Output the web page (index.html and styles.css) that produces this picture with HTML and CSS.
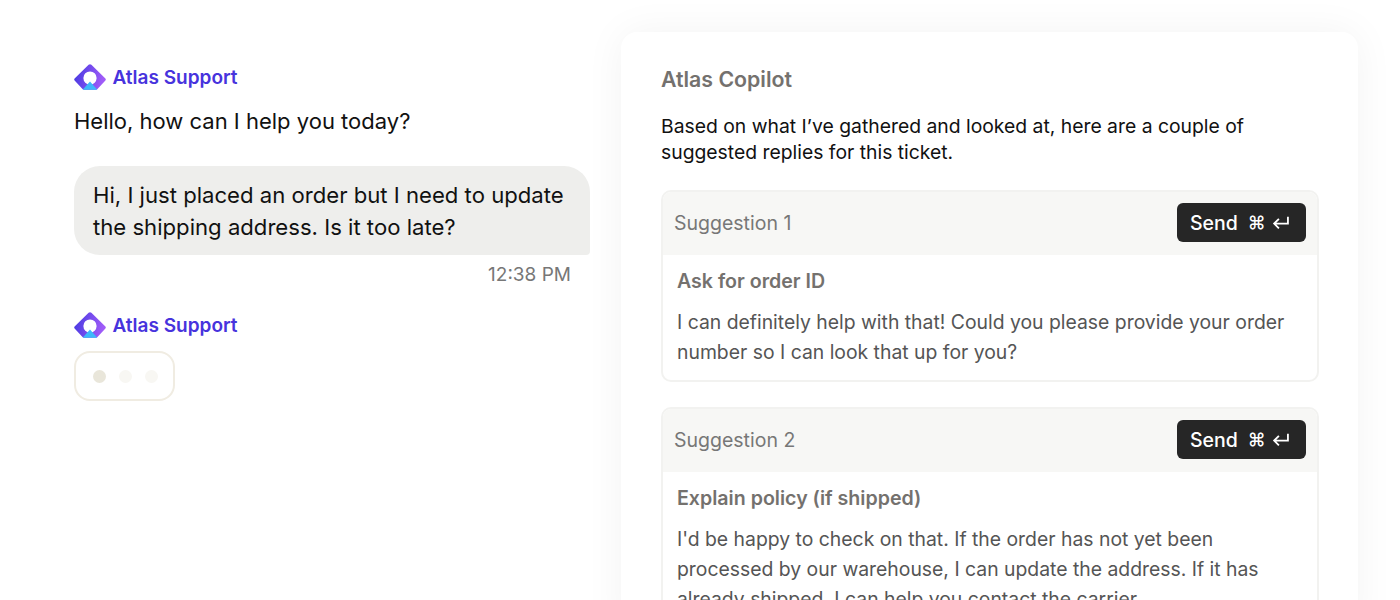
FILE: index.html
```html
<!DOCTYPE html>
<html lang="en">
<head>
    <meta charset="UTF-8">
    <meta name="viewport" content="width=device-width, initial-scale=1.0">
    <title>Atlas Copilot</title>
    <link rel="stylesheet" href="styles.css">
</head>
<body>
    <svg class="defs" width="0" height="0" aria-hidden="true">
        <defs>
            <linearGradient id="logo-grad" x1="0" y1="0" x2="1" y2="0.2">
                <stop offset="0" stop-color="#4338e0"/>
                <stop offset="1" stop-color="#a05cf8"/>
            </linearGradient>
            <symbol id="logo" viewBox="0 0 32 26">
                <path d="M14.6 0.8 Q16 -0.2 17.4 0.8 L31.4 14.6 Q32.2 15.6 31.4 16.6 L23.5 25 Q22.8 25.8 21.8 25.8 L10.2 25.8 Q9.2 25.8 8.5 25 L0.6 16.6 Q-0.2 15.6 0.6 14.6 Z" fill="url(#logo-grad)"/>
                <circle cx="16" cy="14" r="6.6" fill="#fff"/>
                <path d="M16 17.6 L23.4 25.8 L8.6 25.8 Z" fill="#3db8fa"/>
            </symbol>
        </defs>
    </svg>

    <main class="page">
        <section class="chat">
            <div class="agent">
                <svg class="agent-logo"><use href="#logo"/></svg>
                <span class="agent-name">Atlas Support</span>
            </div>
            <p class="agent-msg">Hello, how can I help you today?</p>

            <div class="bubble">Hi, I just placed an order but I need to update the shipping address. Is it too late?</div>
            <div class="timestamp">12:38 PM</div>

            <div class="agent agent-second">
                <svg class="agent-logo"><use href="#logo"/></svg>
                <span class="agent-name">Atlas Support</span>
            </div>
            <div class="typing">
                <span class="dot dot-on"></span>
                <span class="dot"></span>
                <span class="dot"></span>
            </div>
        </section>

        <section class="copilot">
            <h1>Atlas Copilot</h1>
            <p class="intro">Based on what I’ve gathered and looked at, here are a couple of suggested replies for this ticket.</p>

            <div class="card">
                <div class="card-header">
                    <span class="card-label">Suggestion 1</span>
                    <button class="send">Send <span class="keys">⌘ <svg class="enter" viewBox="0 0 16 14"><path d="M15 1.5 V8 H2 M6.5 3.5 L2 8 L6.5 12.5" fill="none" stroke="currentColor" stroke-width="1.7"/></svg></span></button>
                </div>
                <div class="card-body">
                    <h2>Ask for order ID</h2>
                    <p>I can definitely help with that! Could you please provide your order number so I can look that up for you?</p>
                </div>
            </div>

            <div class="card">
                <div class="card-header">
                    <span class="card-label">Suggestion 2</span>
                    <button class="send">Send <span class="keys">⌘ <svg class="enter" viewBox="0 0 16 14"><path d="M15 1.5 V8 H2 M6.5 3.5 L2 8 L6.5 12.5" fill="none" stroke="currentColor" stroke-width="1.7"/></svg></span></button>
                </div>
                <div class="card-body">
                    <h2>Explain policy (if shipped)</h2>
                    <p>I'd be happy to check on that. If the order has not yet been processed by our warehouse, I can update the address. If it has already shipped, I can help you contact the carrier.</p>
                </div>
            </div>
        </section>
    </main>
</body>
</html>
```

FILE: styles.css
```css
* {
    margin: 0;
    padding: 0;
    box-sizing: border-box;
    font-family: Inter, 'Liberation Sans', sans-serif;
}

html, body {
    height: 100%;
    overflow: hidden;
}

body {
    background-color: #fff;
    color: #111;
}

.defs {
    position: absolute;
}

.page {
    display: flex;
    align-items: flex-start;
    padding: 32px 42px 0 74px;
    gap: 31px;
}

/* Chat column */
.chat {
    width: 516px;
    flex-shrink: 0;
    padding-top: 32px;
}

.agent {
    display: flex;
    align-items: center;
    gap: 6.5px;
    height: 26px;
}

.agent-second {
    margin-top: 25px;
}

.agent-logo {
    width: 32px;
    height: 26px;
}

.agent-name {
    color: #4733dd;
    font-size: 19px;
    font-weight: 600;
}

.agent-msg {
    margin-top: 15px;
    font-size: 22px;
    line-height: 32px;
}

.bubble {
    margin-top: 29px;
    padding: 13px 19px 12px;
    background-color: #eeeeec;
    border-radius: 26px 26px 4px 26px;
    font-size: 22.14px;
    line-height: 32px;
}

.timestamp {
    margin-top: 8px;
    padding-right: 19px;
    color: #777;
    font-size: 19px;
    line-height: 24px;
    text-align: right;
}

.typing {
    display: flex;
    align-items: center;
    gap: 13px;
    width: 101px;
    height: 50px;
    margin-top: 13px;
    padding-left: 17px;
    border: 2px solid #f0ece2;
    border-radius: 16px;
}

.dot {
    width: 13px;
    height: 13px;
    border-radius: 50%;
    background-color: #f8f7f3;
}

.dot-on {
    background-color: #e9e6da;
}

/* Copilot panel */
.copilot {
    flex: 1;
    height: 600px;
    padding: 34px 39px 0 40px;
    background-color: #fff;
    border-radius: 16px 16px 0 0;
    box-shadow: 0 0 40px rgba(0, 0, 0, 0.05);
}

.copilot h1 {
    color: #74716e;
    font-size: 21.3px;
    font-weight: 600;
    line-height: 26px;
}

.intro {
    margin-top: 21px;
    font-size: 19.33px;
    line-height: 26px;
}

.card {
    margin-top: 25px;
    border: 2px solid #f2f2f0;
    border-radius: 10px;
    overflow: hidden;
}

.card-header {
    display: flex;
    align-items: center;
    justify-content: space-between;
    height: 63px;
    padding: 0 11px 2px;
    background-color: #f7f7f5;
}

.card-label {
    color: #777;
    font-size: 19.5px;
}

.send {
    display: flex;
    align-items: center;
    gap: 10px;
    width: 129px;
    height: 39px;
    padding-left: 13px;
    border: none;
    border-radius: 6px;
    background-color: #262626;
    color: #fff;
    font-size: 19.5px;
    font-weight: 500;
    cursor: pointer;
}

.keys {
    display: flex;
    align-items: center;
    gap: 6px;
    font-size: 18px;
}

.enter {
    width: 17px;
    height: 15px;
}

.card-body {
    padding: 12px 14px 13px;
}

.card-body h2 {
    color: #74716e;
    font-size: 19.6px;
    font-weight: 600;
    line-height: 28px;
}

.card-body p {
    margin-top: 12px;
    color: #555;
    font-size: 19.36px;
    line-height: 30px;
}
```
